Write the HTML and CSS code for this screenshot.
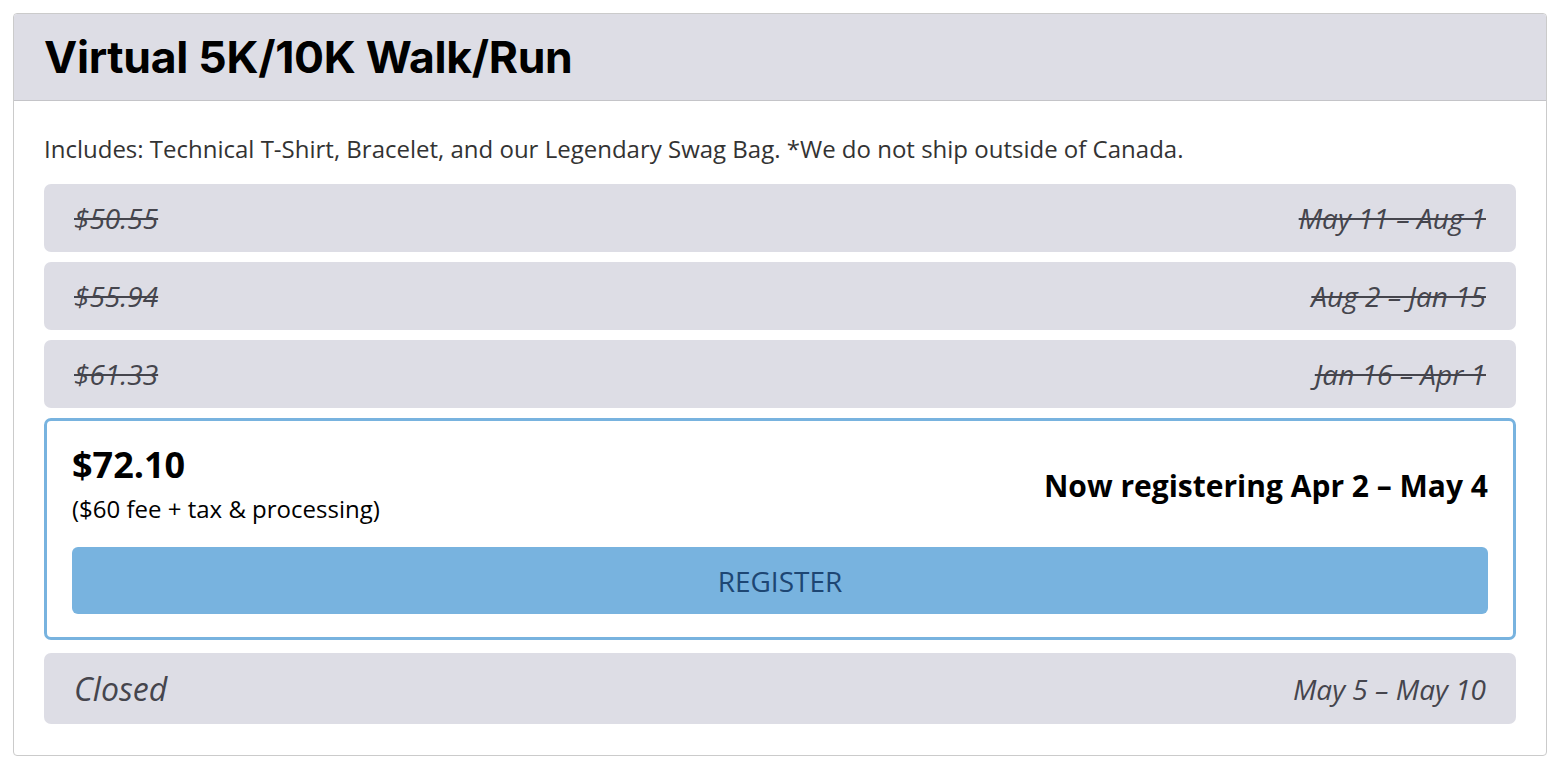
FILE: index.html
```html
<!DOCTYPE html>
<html>
<head>
<meta charset="utf-8">
<link rel="stylesheet" href="styles.css">
</head>
<body>
<div class="card">
  <div class="card-header">
    <h1 class="title">Virtual 5K/10K Walk/Run</h1>
  </div>
  <div class="card-body">
    <p class="desc">Includes: Technical T-Shirt, Bracelet, and our Legendary Swag Bag. *We do not ship outside of Canada.</p>
    <div class="tier past"><span>$50.55</span><span>May 11 – Aug 1</span></div>
    <div class="tier past"><span>$55.94</span><span>Aug 2 – Jan 15</span></div>
    <div class="tier past"><span>$61.33</span><span>Jan 16 – Apr 1</span></div>
    <div class="current">
      <div class="current-top">
        <div class="price-block">
          <div class="price">$72.10</div>
          <div class="fee">($60 fee + tax &amp; processing)</div>
        </div>
        <div class="now">Now registering Apr 2 – May 4</div>
      </div>
      <button class="register">REGISTER</button>
    </div>
    <div class="tier closed"><span class="closed-label">Closed</span><span>May 5 – May 10</span></div>
  </div>
</div>
</body>
</html>
```

FILE: styles.css
```css
* { box-sizing: border-box; }
body {
  margin: 0;
  padding: 13px 11px 0 13px;
  background: #fff;
  font-family: "Open Sans", sans-serif;
  color: #333;
}
.card {
  border: 1px solid #cbcbcb;
  border-radius: 4px;
  overflow: hidden;
  width: 1534px;
}
.card-header {
  background: #dddde5;
  height: 87px;
  border-bottom: 1px solid #c4c4c8;
  display: flex;
  align-items: center;
  padding-left: 30px;
}
.title {
  margin: 0;
  font-family: Inter, "Liberation Sans", sans-serif;
  font-weight: 700;
  font-size: 44.5px;
  color: #000;
  letter-spacing: -0.3px;
}
.card-body {
  padding: 30px 30px 31px 30px;
  display: flex;
  flex-direction: column;
  gap: 10px;
}
.desc {
  margin: 0 0 7px;
  font-size: 24px;
  line-height: 36px;
  color: #333;
}
.tier {
  background: #dddde5;
  border-radius: 7px;
  height: 68px;
  padding: 0 30px;
  display: flex;
  justify-content: space-between;
  align-items: center;
  font-style: italic;
  font-size: 28px;
  color: #45454d;
}
.tier.past span { text-decoration: line-through; text-decoration-thickness: 2px; }
.tier.closed { height: 71px; margin-top: 3px; }
.closed-label { font-size: 32px; }
.current {
  border: 3px solid #78b3df;
  border-radius: 7px;
  padding: 22px 25px 23px 25px;
  display: flex;
  flex-direction: column;
  gap: 20px;
}
.current-top {
  display: flex;
  justify-content: space-between;
  align-items: center;
}
.price {
  font-size: 36px;
  font-weight: 700;
  color: #000;
  line-height: 44px;
}
.fee {
  font-size: 24px;
  color: #000;
  line-height: 36px;
  margin-top: 4px;
}
.now {
  font-size: 30px;
  font-weight: 700;
  color: #000;
}
.register {
  height: 67px;
  background: #78b3df;
  border: none;
  border-radius: 6px;
  font-family: "Open Sans", sans-serif;
  font-size: 28px;
  color: #1d4673;
}
```
